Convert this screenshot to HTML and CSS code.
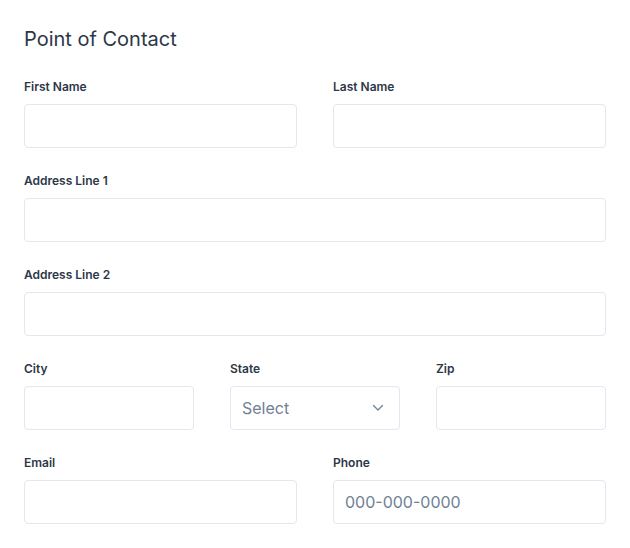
FILE: index.html
```html
<!DOCTYPE html>
<html lang="en">

<head>
    <meta charset="UTF-8">
    <meta name="viewport" content="width=device-width, initial-scale=1.0">
    <title>Point of Contact</title>
    <link rel="stylesheet" href="styles.css">
</head>

<body>
    <form class="contactForm">
        <h1 class="formTitle">Point of Contact</h1>

        <div class="row two">
            <label class="field">
                <span class="fieldLabel">First Name</span>
                <input type="text" class="fieldInput" name="firstname">
            </label>
            <label class="field">
                <span class="fieldLabel">Last Name</span>
                <input type="text" class="fieldInput" name="lastname">
            </label>
        </div>

        <div class="row">
            <label class="field">
                <span class="fieldLabel">Address Line 1</span>
                <input type="text" class="fieldInput" name="address1">
            </label>
        </div>

        <div class="row">
            <label class="field">
                <span class="fieldLabel">Address Line 2</span>
                <input type="text" class="fieldInput" name="address2">
            </label>
        </div>

        <div class="row three">
            <label class="field">
                <span class="fieldLabel">City</span>
                <input type="text" class="fieldInput" name="city">
            </label>
            <label class="field">
                <span class="fieldLabel">State</span>
                <span class="selectWrap">
                    <select class="fieldInput fieldSelect" name="state">
                        <option>Select</option>
                    </select>
                    <svg class="chevron" width="12" height="8" viewBox="0 0 12 8">
                        <path d="M1.5 1.5 L6 6 L10.5 1.5" fill="none" stroke="#718096" stroke-width="1.3" stroke-linecap="round" stroke-linejoin="round" />
                    </svg>
                </span>
            </label>
            <label class="field">
                <span class="fieldLabel">Zip</span>
                <input type="text" class="fieldInput" name="zip">
            </label>
        </div>

        <div class="row two">
            <label class="field">
                <span class="fieldLabel">Email</span>
                <input type="text" class="fieldInput" name="email">
            </label>
            <label class="field">
                <span class="fieldLabel">Phone</span>
                <input type="text" class="fieldInput" name="phone" placeholder="000-000-0000">
            </label>
        </div>
    </form>
</body>

</html>
```

FILE: styles.css
```css
body {
    margin: 0;
    background: #ffffff;
    font-family: Inter, "Noto Sans", sans-serif;
    color: #2d3748;
}

.contactForm {
    padding: 24px;
    display: flex;
    flex-direction: column;
    gap: 25px;
}

.formTitle {
    margin: 0;
    font-size: 20px;
    line-height: 30px;
    font-weight: 400;
    color: #2d3748;
}

.row {
    display: grid;
    grid-template-columns: 1fr;
    column-gap: 36px;
}

.row.two {
    grid-template-columns: 1fr 1fr;
}

.row.three {
    grid-template-columns: 1fr 1fr 1fr;
}

.field {
    display: flex;
    flex-direction: column;
    gap: 9px;
}

.fieldLabel {
    font-size: 12px;
    line-height: 16px;
    font-weight: 600;
    color: #2d3748;
}

.fieldInput {
    box-sizing: border-box;
    width: 100%;
    height: 44px;
    margin: 0;
    padding: 0 11px;
    border: 1px solid #e2e8f0;
    border-radius: 4px;
    background: #ffffff;
    font-family: Inter, "Noto Sans", sans-serif;
    font-size: 16px;
    color: #2d3748;
    outline: none;
}

.fieldInput::placeholder {
    color: #718096;
}

.selectWrap {
    position: relative;
    display: block;
}

.fieldSelect {
    appearance: none;
    -webkit-appearance: none;
    color: #718096;
}

.chevron {
    position: absolute;
    right: 16px;
    top: 18px;
    pointer-events: none;
}
```
